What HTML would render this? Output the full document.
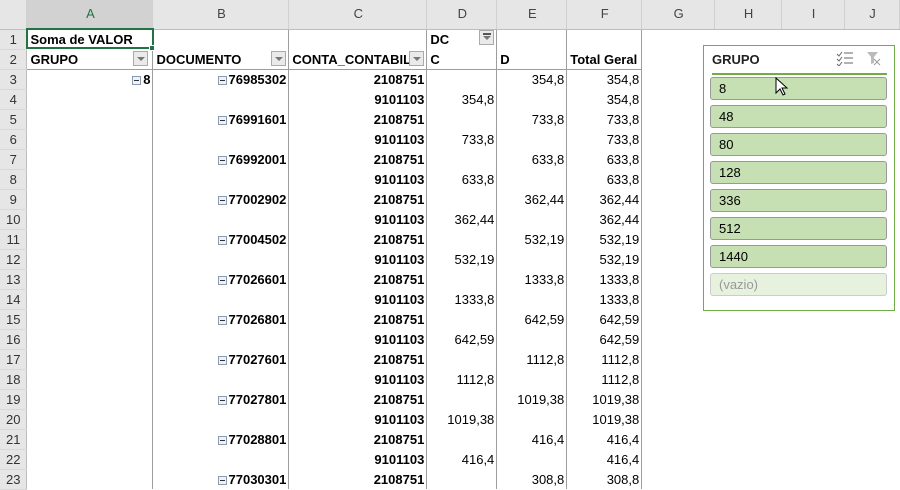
<!DOCTYPE html>
<html><head><meta charset="utf-8"><style>
*{margin:0;padding:0;box-sizing:border-box}
body{width:900px;height:484px;overflow:hidden;background:#fff;font-family:"Liberation Sans",Arial,sans-serif;position:relative}
table{border-collapse:collapse;table-layout:fixed;position:absolute;left:0;top:0}
td{height:20px;font-size:13px;padding:0 2px 0 3px;white-space:nowrap;overflow:hidden;vertical-align:bottom;line-height:18px}
tr.h td{height:29px;background:#e6e6e6;text-align:center;font-size:13px;color:#444;border-bottom:1px solid #bdbdbd;border-right:1px solid #d0d0d0;vertical-align:middle}
tr.h td.a{background:#d2d2d2;color:#217346;border-bottom:2px solid #217346}
td.rh{background:#e6e6e6;color:#333;text-align:center;font-size:13px;border-bottom:1px solid #d8d8d8;border-right:1px solid #bdbdbd;padding:0}
td.v{border-right:1px solid #9e9e9e}
td.b{font-weight:bold}
td.r{text-align:right}
tr.t td.v,tr.t td.p{border-bottom:1px solid #9e9e9e}
.m{display:inline-block;width:9px;height:9px;border:1px solid #8a9bb0;background:#eef1f5;position:relative;margin-right:2px;vertical-align:-1px}
.m:after{content:"";position:absolute;left:1px;top:3px;width:5px;height:1px;background:#333}
.dd{position:absolute;width:15px;height:15px;border:1px solid #aaa;background:#eaeaea}
.dd:after{content:"";position:absolute;left:3px;top:5px;border:4px solid transparent;border-top:4px solid #777}
.sl{position:absolute;left:703px;top:45px;width:192px;height:266px;border:1px solid #70ad47;background:#fff}
.it{position:absolute;left:6px;width:177px;height:23px;background:#c6e0b4;border:1px solid #999;border-radius:3px;font-size:13px;line-height:21px;padding-left:8px;color:#000}
</style></head><body>
<table>
<colgroup><col style="width:27px"><col style="width:126px"><col style="width:136px"><col style="width:138px"><col style="width:70px"><col style="width:70px"><col style="width:75px"><col style="width:73px"><col style="width:67px"><col style="width:63px"><col style="width:55px"></colgroup>
<tr class="h"><td style="background:#e6e6e6"></td><td class="a">A</td><td>B</td><td>C</td><td>D</td><td>E</td><td>F</td><td>G</td><td>H</td><td>I</td><td>J</td></tr>
<tr><td class="rh">1</td><td class="v b">Soma de VALOR</td><td class="v"></td><td class="v"></td><td class="v b">DC</td><td class="v"></td><td class="v"></td><td></td><td></td><td></td><td></td></tr>
<tr class="t"><td class="rh">2</td><td class="v b">GRUPO</td><td class="v b">DOCUMENTO</td><td class="v b">CONTA_CONTABIL</td><td class="v b">C</td><td class="v b">D</td><td class="v b">Total Geral</td><td></td><td></td><td></td><td></td></tr>
<tr><td class="rh">3</td><td class="v b r"><span class="m"></span>8</td><td class="v b r"><span class="m"></span>76985302</td><td class="v b r">2108751</td><td class="v r"></td><td class="v r">354,8</td><td class="v r">354,8</td><td></td><td></td><td></td><td></td></tr>
<tr><td class="rh">4</td><td class="v"></td><td class="v"></td><td class="v b r">9101103</td><td class="v r">354,8</td><td class="v r"></td><td class="v r">354,8</td><td></td><td></td><td></td><td></td></tr>
<tr><td class="rh">5</td><td class="v"></td><td class="v b r"><span class="m"></span>76991601</td><td class="v b r">2108751</td><td class="v r"></td><td class="v r">733,8</td><td class="v r">733,8</td><td></td><td></td><td></td><td></td></tr>
<tr><td class="rh">6</td><td class="v"></td><td class="v"></td><td class="v b r">9101103</td><td class="v r">733,8</td><td class="v r"></td><td class="v r">733,8</td><td></td><td></td><td></td><td></td></tr>
<tr><td class="rh">7</td><td class="v"></td><td class="v b r"><span class="m"></span>76992001</td><td class="v b r">2108751</td><td class="v r"></td><td class="v r">633,8</td><td class="v r">633,8</td><td></td><td></td><td></td><td></td></tr>
<tr><td class="rh">8</td><td class="v"></td><td class="v"></td><td class="v b r">9101103</td><td class="v r">633,8</td><td class="v r"></td><td class="v r">633,8</td><td></td><td></td><td></td><td></td></tr>
<tr><td class="rh">9</td><td class="v"></td><td class="v b r"><span class="m"></span>77002902</td><td class="v b r">2108751</td><td class="v r"></td><td class="v r">362,44</td><td class="v r">362,44</td><td></td><td></td><td></td><td></td></tr>
<tr><td class="rh">10</td><td class="v"></td><td class="v"></td><td class="v b r">9101103</td><td class="v r">362,44</td><td class="v r"></td><td class="v r">362,44</td><td></td><td></td><td></td><td></td></tr>
<tr><td class="rh">11</td><td class="v"></td><td class="v b r"><span class="m"></span>77004502</td><td class="v b r">2108751</td><td class="v r"></td><td class="v r">532,19</td><td class="v r">532,19</td><td></td><td></td><td></td><td></td></tr>
<tr><td class="rh">12</td><td class="v"></td><td class="v"></td><td class="v b r">9101103</td><td class="v r">532,19</td><td class="v r"></td><td class="v r">532,19</td><td></td><td></td><td></td><td></td></tr>
<tr><td class="rh">13</td><td class="v"></td><td class="v b r"><span class="m"></span>77026601</td><td class="v b r">2108751</td><td class="v r"></td><td class="v r">1333,8</td><td class="v r">1333,8</td><td></td><td></td><td></td><td></td></tr>
<tr><td class="rh">14</td><td class="v"></td><td class="v"></td><td class="v b r">9101103</td><td class="v r">1333,8</td><td class="v r"></td><td class="v r">1333,8</td><td></td><td></td><td></td><td></td></tr>
<tr><td class="rh">15</td><td class="v"></td><td class="v b r"><span class="m"></span>77026801</td><td class="v b r">2108751</td><td class="v r"></td><td class="v r">642,59</td><td class="v r">642,59</td><td></td><td></td><td></td><td></td></tr>
<tr><td class="rh">16</td><td class="v"></td><td class="v"></td><td class="v b r">9101103</td><td class="v r">642,59</td><td class="v r"></td><td class="v r">642,59</td><td></td><td></td><td></td><td></td></tr>
<tr><td class="rh">17</td><td class="v"></td><td class="v b r"><span class="m"></span>77027601</td><td class="v b r">2108751</td><td class="v r"></td><td class="v r">1112,8</td><td class="v r">1112,8</td><td></td><td></td><td></td><td></td></tr>
<tr><td class="rh">18</td><td class="v"></td><td class="v"></td><td class="v b r">9101103</td><td class="v r">1112,8</td><td class="v r"></td><td class="v r">1112,8</td><td></td><td></td><td></td><td></td></tr>
<tr><td class="rh">19</td><td class="v"></td><td class="v b r"><span class="m"></span>77027801</td><td class="v b r">2108751</td><td class="v r"></td><td class="v r">1019,38</td><td class="v r">1019,38</td><td></td><td></td><td></td><td></td></tr>
<tr><td class="rh">20</td><td class="v"></td><td class="v"></td><td class="v b r">9101103</td><td class="v r">1019,38</td><td class="v r"></td><td class="v r">1019,38</td><td></td><td></td><td></td><td></td></tr>
<tr><td class="rh">21</td><td class="v"></td><td class="v b r"><span class="m"></span>77028801</td><td class="v b r">2108751</td><td class="v r"></td><td class="v r">416,4</td><td class="v r">416,4</td><td></td><td></td><td></td><td></td></tr>
<tr><td class="rh">22</td><td class="v"></td><td class="v"></td><td class="v b r">9101103</td><td class="v r">416,4</td><td class="v r"></td><td class="v r">416,4</td><td></td><td></td><td></td><td></td></tr>
<tr><td class="rh">23</td><td class="v"></td><td class="v b r"><span class="m"></span>77030301</td><td class="v b r">2108751</td><td class="v r"></td><td class="v r">308,8</td><td class="v r">308,8</td><td></td><td></td><td></td><td></td></tr>
</table>
<div style="position:absolute;left:26px;top:28px;width:128px;height:21px;border:2px solid #217346"></div>
<div style="position:absolute;left:149px;top:45px;width:6px;height:6px;background:#217346;border:1px solid #fff"></div>
<div class="dd" style="left:133px;top:51px"></div>
<div class="dd" style="left:271px;top:51px"></div>
<div class="dd" style="left:409px;top:51px"></div>
<div class="dd" style="left:479px;top:30px"><span style="position:absolute;left:3px;top:2px;width:8px;height:2px;background:#555"></span></div>
<div class="sl">
<div style="position:absolute;left:8px;top:6px;font-size:13px;font-weight:bold;color:#222">GRUPO</div>
<svg style="position:absolute;left:132px;top:4px" width="18" height="16"><path d="M1 4l2 2 3-4M1 9l2 2 3-4M1 14l2 2 3-4" stroke="#666" fill="none"/><path d="M8 3h9M8 8h9M8 13h9" stroke="#666"/></svg>
<svg style="position:absolute;left:162px;top:4px" width="16" height="16"><path d="M1 2h11l-4 5v6l-3 1V7z" fill="#bbb"/><path d="M8 9l6 6M14 9l-6 6" stroke="#999"/></svg>
<div style="position:absolute;left:8px;top:27px;width:175px;height:2px;background:#70ad47"></div>
<div class="it" style="top:31px">8</div>
<div class="it" style="top:59px">48</div>
<div class="it" style="top:87px">80</div>
<div class="it" style="top:115px">128</div>
<div class="it" style="top:143px">336</div>
<div class="it" style="top:171px">512</div>
<div class="it" style="top:199px">1440</div>
<div class="it" style="top:227px;background:#e6f1de;border-color:#ccc;color:#999">(vazio)</div>
</div>
<svg style="position:absolute;left:775px;top:77px" width="14" height="20"><path d="M1 1v15l4-4 3 6 2-1-3-6h5z" fill="#fff" stroke="#000"/></svg>
</body></html>
